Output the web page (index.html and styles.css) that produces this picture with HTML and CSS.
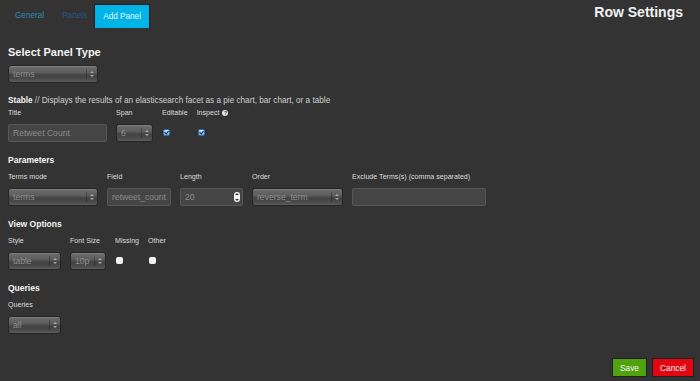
FILE: index.html
```html
<!DOCTYPE html>
<html lang="en">
<head>
    <meta charset="UTF-8">
    <meta name="viewport" content="width=device-width, initial-scale=1.0">
    <title>Row Settings</title>
    <link rel="stylesheet" href="styles.css">
</head>
<body>

<div class="header">
    <ul class="tabs">
        <li class="tab"><a class="tab-link general">General</a></li>
        <li class="tab"><a class="tab-link panels">Panels</a></li>
        <li class="tab active"><a class="tab-link">Add Panel</a></li>
    </ul>
    <h3 class="page-title">Row Settings</h3>
</div>

<h4 class="panel-type">Select Panel Type</h4>
<div class="select w90"><span class="select-text">terms</span><span class="arrows"></span></div>

<p class="desc"><strong>Stable</strong> // Displays the results of an elasticsearch facet as a pie chart, bar chart, or a table</p>

<div class="row">
    <div class="field">
        <label class="lbl">Title</label>
        <div class="input w99">Retweet Count</div>
    </div>
    <div class="field">
        <label class="lbl">Span</label>
        <div class="select w37"><span class="select-text">6</span><span class="arrows"></span></div>
    </div>
    <div class="field">
        <label class="lbl">Editable</label>
        <span class="check on"></span>
    </div>
    <div class="field">
        <label class="lbl">Inspect <span class="help">?</span></label>
        <span class="check on"></span>
    </div>
</div>

<h5 class="section">Parameters</h5>
<div class="row">
    <div class="field">
        <label class="lbl">Terms mode</label>
        <div class="select w90"><span class="select-text">terms</span><span class="arrows"></span></div>
    </div>
    <div class="field">
        <label class="lbl">Field</label>
        <div class="input w64">retweet_count</div>
    </div>
    <div class="field">
        <label class="lbl">Length</label>
        <div class="input w63">20<span class="spinner"></span></div>
    </div>
    <div class="field">
        <label class="lbl">Order</label>
        <div class="select w91"><span class="select-text">reverse_term</span><span class="arrows"></span></div>
    </div>
    <div class="field">
        <label class="lbl">Exclude Terms(s) (comma separated)</label>
        <div class="input w134"></div>
    </div>
</div>

<h5 class="section">View Options</h5>
<div class="row">
    <div class="field">
        <label class="lbl">Style</label>
        <div class="select w53"><span class="select-text">table</span><span class="arrows"></span></div>
    </div>
    <div class="field">
        <label class="lbl">Font Size</label>
        <div class="select w36"><span class="select-text">10p</span><span class="arrows"></span></div>
    </div>
    <div class="field">
        <label class="lbl">Missing</label>
        <span class="check"></span>
    </div>
    <div class="field">
        <label class="lbl">Other</label>
        <span class="check"></span>
    </div>
</div>

<h5 class="section">Queries</h5>
<div class="row">
    <div class="field">
        <label class="lbl">Queries</label>
        <div class="select w53"><span class="select-text">all</span><span class="arrows"></span></div>
    </div>
</div>

<div class="footer">
    <button class="btn btn-save">Save</button>
    <button class="btn btn-cancel">Cancel</button>
</div>

</body>
</html>
```

FILE: styles.css
```css
/* Page */
html, body {
    height: 100%;
}

body {
    margin: 0;
    padding: 0 6px 0 8px;
    box-sizing: border-box;
    background-color: #333333;
    color: #dddddd;
    font-family: "Liberation Sans", Arial, sans-serif;
    display: flex;
    flex-direction: column;
}

/* Header with tabs */
.header {
    display: flex;
    justify-content: space-between;
    align-items: flex-start;
    height: 29px;
}

.tabs {
    display: flex;
    list-style: none;
    margin: 0 0 0 -2px;
    padding: 4px 0 0 0;
}

.tab-link {
    display: block;
    height: 24px;
    line-height: 24px;
    padding: 0 9px;
    font-size: 8.2px;
    box-sizing: border-box;
    cursor: pointer;
}

.tab-link.general {
    color: #2a89ad;
}

.tab-link.panels {
    color: #24598a;
}

.tab.active .tab-link {
    background-color: #00b4e8;
    color: #e8f6fb;
    border: 1px solid #1c1c1c;
    border-bottom: none;
    padding: 0 8px;
    margin-left: -2px;
}

.page-title {
    margin: 4px 11px 0 0;
    font-size: 14px;
    line-height: 16px;
    color: #f2f2f2;
}

/* Headings */
.panel-type {
    margin: 17px 0 6px 0;
    font-size: 11px;
    line-height: 13px;
    color: #f4f4f4;
}

.section {
    margin: 13px 0 8px 0;
    font-size: 8.5px;
    line-height: 10px;
    color: #f4f4f4;
}

.desc {
    margin: 13px 0 4px 0;
    font-size: 8.2px;
    line-height: 9px;
    color: #cfcfcf;
}

.desc strong {
    color: #f4f4f4;
}

/* Form rows */
.row {
    display: flex;
    gap: 9px;
}

.field {
    display: flex;
    flex-direction: column;
}

.lbl {
    display: block;
    height: 9px;
    line-height: 9px;
    margin-bottom: 6px;
    font-size: 7.1px;
    color: #dcdcdc;
    white-space: nowrap;
}

.help {
    display: inline-block;
    width: 6px;
    height: 6px;
    line-height: 6px;
    border-radius: 50%;
    background-color: #e6e6e6;
    color: #333;
    font-size: 5px;
    font-weight: bold;
    text-align: center;
    vertical-align: middle;
    margin-left: 1px;
}

/* Select boxes */
.select {
    position: relative;
    height: 18px;
    box-sizing: border-box;
    border: 1px solid #272727;
    border-radius: 3px;
    background: linear-gradient(to bottom, #6e6e6e 0%, #5c5c5c 40%, #424242 58%, #4a4a4a 80%, #5c5c5c 100%);
    box-shadow: inset 0 1px 0 rgba(255, 255, 255, 0.12);
    color: #8e8e8e;
    font-size: 8.6px;
    line-height: 16px;
    padding-left: 4px;
    overflow: hidden;
    white-space: nowrap;
}

.select-text {
    display: inline-block;
}

.arrows {
    position: absolute;
    top: 3px;
    right: 0;
    width: 10px;
    height: 10px;
    border-left: 1px solid rgba(0, 0, 0, 0.25);
}

.arrows::before, .arrows::after {
    content: "";
    position: absolute;
    left: 3px;
    border-left: 2px solid transparent;
    border-right: 2px solid transparent;
}

.arrows::before {
    top: 2px;
    border-bottom: 2px solid #a8a8a8;
}

.arrows::after {
    top: 6px;
    border-top: 2px solid #a8a8a8;
}

/* Text inputs */
.input {
    position: relative;
    height: 18px;
    box-sizing: border-box;
    border: 1px solid #565656;
    border-radius: 2px;
    background-color: #454545;
    color: #8a8a8a;
    font-size: 8.6px;
    line-height: 16px;
    padding-left: 4px;
    white-space: nowrap;
    overflow: hidden;
}

.spinner {
    position: absolute;
    right: 2px;
    top: 3px;
    width: 6px;
    height: 10px;
    border-radius: 3px;
    background-color: #f2f2f2;
}

.spinner::before, .spinner::after {
    content: "";
    position: absolute;
    left: 1px;
    border-left: 2px solid transparent;
    border-right: 2px solid transparent;
}

.spinner::before {
    top: 1px;
    border-bottom: 2px solid #333;
}

.spinner::after {
    bottom: 1px;
    border-top: 2px solid #333;
}

.w37 { width: 37px; }
.w36 { width: 36px; }
.w53 { width: 53px; }
.w63 { width: 63px; }
.w64 { width: 64px; }
.w90 { width: 90px; }
.w91 { width: 91px; }
.w99 { width: 99px; }
.w134 { width: 134px; }

/* Checkboxes */
.check {
    display: block;
    width: 7px;
    height: 7px;
    margin: 5px 0 0 1px;
    border-radius: 2px;
    background-color: #f4f4f4;
    box-sizing: border-box;
}

.check.on {
    position: relative;
    border: 1px solid #3b6ea8;
    background: linear-gradient(to bottom, #cfe6fb, #6aaaf0);
}

.check.on::after {
    content: "";
    position: absolute;
    left: 1px;
    top: 0;
    width: 2px;
    height: 3px;
    border-right: 1px solid #13315a;
    border-bottom: 1px solid #13315a;
    transform: rotate(40deg);
}

/* Footer buttons */
.footer {
    margin-top: auto;
    display: flex;
    justify-content: flex-end;
    gap: 5px;
    padding-bottom: 4px;
}

.btn {
    height: 19px;
    padding: 0;
    border: 1px solid #1f1f1f;
    font-family: "Liberation Sans", Arial, sans-serif;
    font-size: 8.3px;
    color: #f3f3f3;
    cursor: pointer;
}

.btn-save {
    width: 35px;
    background-color: #51a20f;
}

.btn-cancel {
    width: 42px;
    background-color: #e30611;
}
```
